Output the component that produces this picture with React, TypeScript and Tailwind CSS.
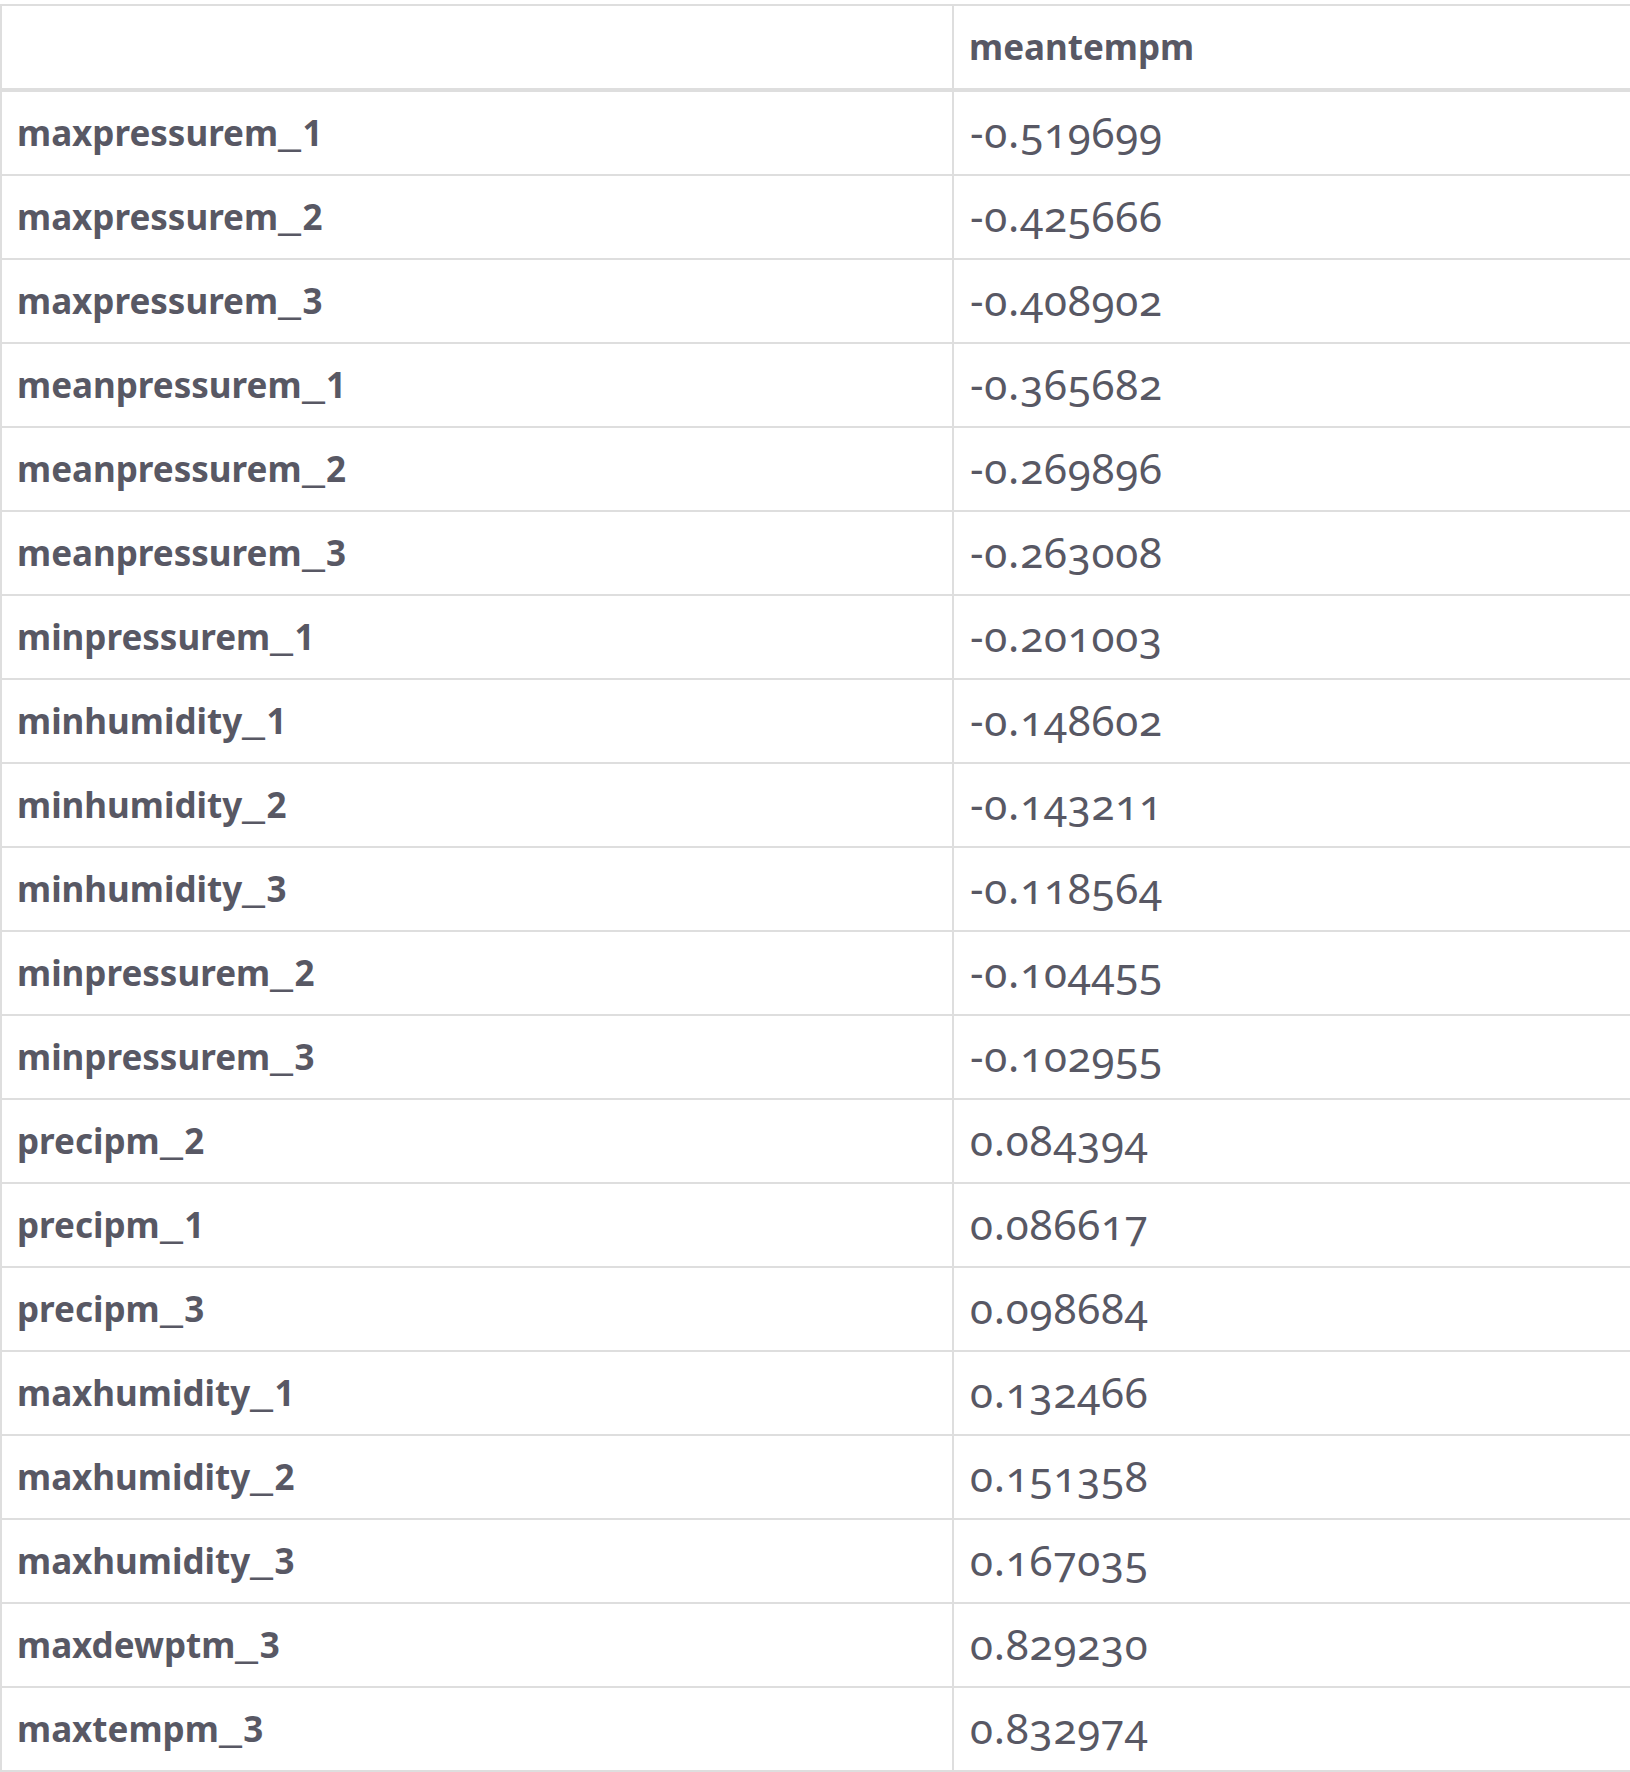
import React from "react";

const rows: [string, string][] = [
  ["maxpressurem_1", "-0.519699"],
  ["maxpressurem_2", "-0.425666"],
  ["maxpressurem_3", "-0.408902"],
  ["meanpressurem_1", "-0.365682"],
  ["meanpressurem_2", "-0.269896"],
  ["meanpressurem_3", "-0.263008"],
  ["minpressurem_1", "-0.201003"],
  ["minhumidity_1", "-0.148602"],
  ["minhumidity_2", "-0.143211"],
  ["minhumidity_3", "-0.118564"],
  ["minpressurem_2", "-0.104455"],
  ["minpressurem_3", "-0.102955"],
  ["precipm_2", "0.084394"],
  ["precipm_1", "0.086617"],
  ["precipm_3", "0.098684"],
  ["maxhumidity_1", "0.132466"],
  ["maxhumidity_2", "0.151358"],
  ["maxhumidity_3", "0.167035"],
  ["maxdewptm_3", "0.829230"],
  ["maxtempm_3", "0.832974"],
];

function Label({ text }: { text: string }) {
  const i = text.lastIndexOf("_");
  return (
    <>
      {text.slice(0, i)}
      <span className="inline-block origin-left scale-x-[1.6] mr-[10px]">_</span>
      {text.slice(i + 1)}
    </>
  );
}

export default function App() {
  return (
    <div className="w-[1630px] h-[1772px] overflow-hidden bg-white pt-[4px] text-[#585864] font-['Noto_Sans',sans-serif]">
      <div className="w-[1700px] border-t-2 border-l-2 border-[#dedede]">
        <div className="flex h-[86px] border-b-4 border-[#dedede]">
          <div className="w-[952px] shrink-0 border-r-2 border-[#dedede]" />
          <div className="flex items-center pl-[15px] text-[35px] font-bold">meantempm</div>
        </div>
        {rows.map(([k, v]) => (
          <div key={k} className="flex h-[84px] border-b-2 border-[#dedede]">
            <div className="w-[952px] shrink-0 border-r-2 border-[#dedede] flex items-center pl-[15px] text-[35px] font-bold">
              <span>
                <Label text={k} />
              </span>
            </div>
            <div className="flex items-center pl-[16px] pb-[3px] text-[42px] tracking-[0.8px] [font-variant-numeric:oldstyle-nums]">
              {v}
            </div>
          </div>
        ))}
      </div>
    </div>
  );
}
